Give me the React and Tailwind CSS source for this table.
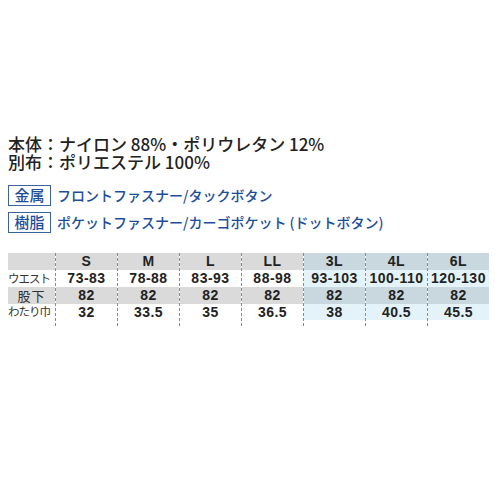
const cols = [
  { size: 'S', w: '73-83', i: '82', h: '32', blue: false },
  { size: 'M', w: '78-88', i: '82', h: '33.5', blue: false },
  { size: 'L', w: '83-93', i: '82', h: '35', blue: false },
  { size: 'LL', w: '88-98', i: '82', h: '36.5', blue: false },
  { size: '3L', w: '93-103', i: '82', h: '38', blue: true },
  { size: '4L', w: '100-110', i: '82', h: '40.5', blue: true },
  { size: '6L', w: '120-130', i: '82', h: '45.5', blue: true },
];

const jp = { fontFamily: '"Noto Sans CJK JP", "Noto Sans", sans-serif' };
const num = { fontFamily: '"Liberation Sans", Arial, sans-serif' };

function SizeColumn({ c }) {
  const dark = c.blue ? 'bg-[#c9d7df]' : 'bg-[#dadada]';
  const light = c.blue ? 'bg-[#e4f3fa]' : 'bg-white';
  return (
    <div className="flex w-[62px] flex-col border-l border-dashed border-[#8a8a8a]">
      <div className={`h-[17px] ${dark} flex items-center justify-center`}>{c.size}</div>
      <div className={`h-[17px] ${light} flex items-center justify-center whitespace-nowrap`}>{c.w}</div>
      <div className={`h-[17px] ${dark} flex items-center justify-center`}>{c.i}</div>
      <div className={`h-[16px] ${light} flex items-center justify-center`}>{c.h}</div>
      <div className="h-[6px]" />
    </div>
  );
}

export default function App() {
  return (
    <div className="h-[500px] w-[500px] bg-white pt-[135px]">
      <div className="pl-[8px] text-[17px] leading-[18px] font-medium text-[#222]" style={jp}>
        <div>本体：ナイロン 88%・ポリウレタン 12%</div>
        <div>別布：ポリエステル 100%</div>
      </div>

      <div className="mt-[14px] flex flex-col gap-[6px] pl-[8px] text-[#1d4e9a]" style={jp}>
        <div className="flex items-center gap-[6px]">
          <span className="flex h-[21px] w-[43px] items-center justify-center border border-[#3a64a0] text-[15px] font-medium">金属</span>
          <span className="text-[14px] leading-[21px] font-medium">フロントファスナー/タックボタン</span>
        </div>
        <div className="flex items-center gap-[6px]">
          <span className="flex h-[21px] w-[43px] items-center justify-center border border-[#3a64a0] text-[15px] font-medium">樹脂</span>
          <span className="text-[14px] leading-[21px] font-medium">ポケットファスナー/カーゴポケット (ドットボタン)</span>
        </div>
      </div>

      <div className="mt-[20px] ml-[8px] flex">
        <div className="flex w-[47px] flex-col text-[11.5px] tracking-[-1px] text-[#333]" style={jp}>
          <div className="h-[17px] bg-[#dadada]" />
          <div className="flex h-[17px] items-center whitespace-nowrap">ウエスト</div>
          <div className="flex h-[17px] items-center justify-center bg-[#dadada] text-[13px] tracking-[1px]">股下</div>
          <div className="flex h-[16px] items-center whitespace-nowrap">わたり巾</div>
        </div>
        <div className="flex text-[14px] font-bold tracking-[0.5px] text-[#222]" style={num}>
          {cols.map((c) => (
            <SizeColumn key={c.size} c={c} />
          ))}
        </div>
      </div>
    </div>
  );
}
